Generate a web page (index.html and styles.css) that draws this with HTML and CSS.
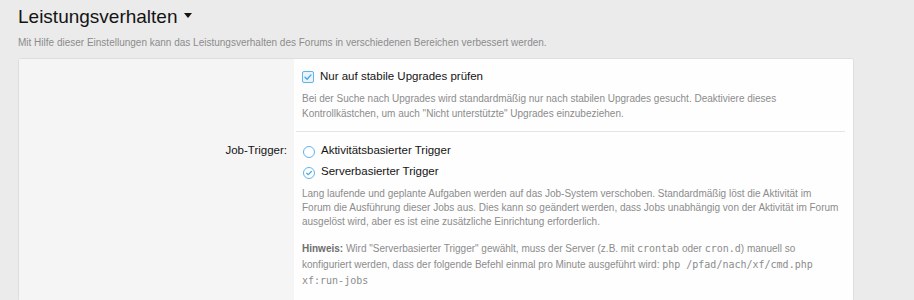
FILE: index.html
```html
<!DOCTYPE html>
<html lang="de">
<head>
<meta charset="utf-8">
<title>Leistungsverhalten</title>
<link rel="stylesheet" href="styles.css">
</head>
<body>
<div class="page">
  <h2 class="block-title">Leistungsverhalten <span class="caret"></span></h2>
  <div class="block-desc">Mit Hilfe dieser Einstellungen kann das Leistungsverhalten des Forums in verschiedenen Bereichen verbessert werden.</div>
  <div class="panel">
    <div class="row-label"></div>
    <div class="row-input">
      <div class="row-inner first">
        <label class="choice">
          <span class="checkbox"><svg viewBox="0 0 12 12" width="12" height="12"><path d="M3 6.2 L5.1 8.2 L9 3.9" fill="none" stroke="#47a7eb" stroke-width="1.4" stroke-linecap="round" stroke-linejoin="round"/></svg></span>
          <span class="choice-text">Nur auf stabile Upgrades prüfen</span>
        </label>
        <div class="explain">Bei der Suche nach Upgrades wird standardmäßig nur nach stabilen Upgrades gesucht. Deaktiviere dieses<br>Kontrollkästchen, um auch "Nicht unterstützte" Upgrades einzubeziehen.</div>
      </div>
    </div>
    <div class="row-label"><span class="label-text">Job-Trigger:</span></div>
    <div class="row-input">
      <div class="row-inner second">
        <label class="choice">
          <span class="radio"></span>
          <span class="choice-text">Aktivitätsbasierter Trigger</span>
        </label>
        <label class="choice next">
          <span class="radio"><svg viewBox="0 0 12 12" width="12" height="12"><path d="M3.6 6.1 L5.3 7.7 L8.4 4.5" fill="none" stroke="#47a7eb" stroke-width="1.2" stroke-linecap="round" stroke-linejoin="round"/></svg></span>
          <span class="choice-text">Serverbasierter Trigger</span>
        </label>
        <div class="explain desc">Lang laufende und geplante Aufgaben werden auf das Job-System verschoben. Standardmäßig löst die Aktivität im<br>Forum die Ausführung dieser Jobs aus. Dies kann so geändert werden, dass Jobs unabhängig von der Aktivität im Forum<br>ausgelöst wird, aber es ist eine zusätzliche Einrichtung erforderlich.</div>
        <div class="explain note"><b>Hinweis:</b> Wird "Serverbasierter Trigger" gewählt, muss der Server (z.B. mit <code>crontab</code> oder <code>cron.d</code>) manuell so<br>konfiguriert werden, dass der folgende Befehl einmal pro Minute ausgeführt wird: <code>php /pfad/nach/xf/cmd.php</code><br><code>xf:run-jobs</code></div>
      </div>
    </div>
  </div>
</div>
</body>
</html>
```

FILE: styles.css
```css
html, body {
  margin: 0;
  padding: 0;
  background: #ebebeb;
}
body {
  font-family: "Liberation Sans", Arial, sans-serif;
  color: #141414;
}
.page {
  padding: 5px 0 0 18px;
}
.block-title {
  margin: 0;
  font-size: 19px;
  line-height: 24px;
  font-weight: normal;
  color: #141414;
}
.caret {
  display: inline-block;
  width: 0;
  height: 0;
  border-left: 4.5px solid transparent;
  border-right: 4.5px solid transparent;
  border-top: 5px solid #141414;
  vertical-align: middle;
  margin-left: 1px;
  position: relative;
  top: -2px;
}
.block-desc {
  margin-top: 6px;
  font-size: 10px;
  line-height: 15px;
  color: #8c8c8c;
}
.panel {
  margin-top: 8px;
  width: 834px;
  border: 1px solid #dedede;
  border-radius: 3px;
  background: #fefefe;
  display: grid;
  grid-template-columns: 275px 1fr;
  overflow: hidden;
}
.row-label {
  background: #f5f5f5;
  text-align: right;
  padding: 9px 7px 0 0;
  font-size: 11.5px;
  line-height: 18px;
  color: #141414;
}
.row-input {
  background: #fefefe;
}
.row-inner {
  margin: 0 8px 0 2px;
  padding-left: 6px;
  border-bottom: 1px solid #e4e4e4;
  white-space: nowrap;
}
.row-inner.first {
  padding-top: 8px;
  padding-bottom: 10px;
}
.row-inner.second {
  padding-top: 9px;
  padding-bottom: 11px;
}
.choice {
  display: flex;
  align-items: center;
  font-size: 11.5px;
  line-height: 18px;
  color: #141414;
}
.choice.next {
  margin-top: 3px;
}
.checkbox {
  width: 10px;
  height: 10px;
  border: 1px solid #63b2ea;
  border-radius: 2px;
  background: #e9f4fc;
  margin-right: 6px;
  display: flex;
  align-items: center;
  justify-content: center;
  position: relative;
  top: 1px;
  flex: none;
}
.checkbox svg {
  display: block;
  flex: none;
}
.radio {
  width: 10px;
  height: 10px;
  border: 1px solid #63b2ea;
  border-radius: 50%;
  background: #fff;
  margin-right: 6px;
  margin-left: 1px;
  display: flex;
  align-items: center;
  justify-content: center;
  position: relative;
  top: 2px;
  flex: none;
}
.radio svg {
  display: block;
  flex: none;
}
.explain {
  margin-top: 6px;
  font-size: 10px;
  line-height: 15px;
  color: #8c8c8c;
}
.explain.desc {
  margin-top: 7px;
  line-height: 14px;
}
.explain.note {
  margin-top: 12px;
  line-height: 16px;
}
.explain b {
  color: #6e6e6e;
  font-weight: bold;
}
code {
  font-family: "DejaVu Sans Mono", "Liberation Mono", monospace;
  font-size: 10px;
  line-height: 1;
  color: #8c8c8c;
}
```
